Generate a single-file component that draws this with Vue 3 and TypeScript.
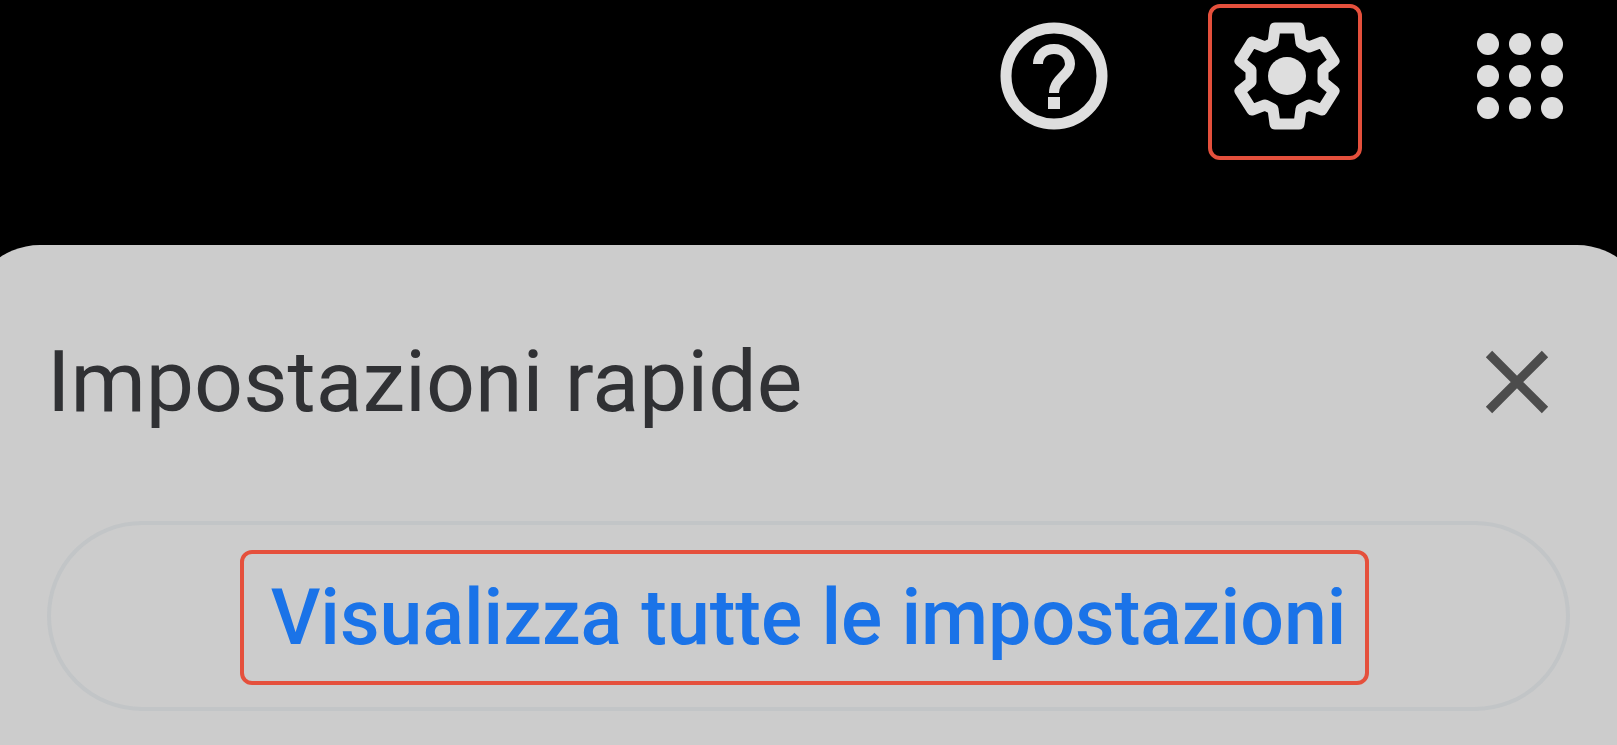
<script setup lang="ts">
const dotOffsets: number[] = [-32, 0, 32]
</script>

<template>
  <div class="page">
    <header class="toolbar">
      <button class="icon-button" type="button" aria-label="Assistenza">
        <svg viewBox="-64 -64 128 128" aria-hidden="true">
          <circle r="48" class="line" />
          <path class="line hook" d="M-16-12C-16-21-9-27 0-27C10-27 16-20 16-12C16-1 0 2 0 17" />
          <rect class="solid" x="-6" y="21" width="12" height="12" />
        </svg>
      </button>
      <button class="icon-button" type="button" aria-label="Impostazioni">
        <svg viewBox="-64 -64 128 128" aria-hidden="true">
          <path
            class="line"
            d="M-12-48H12L14-33L22-29L35-34L47-15L36-6V6L47 15L35 34L22 29L14 33L12 48H-12L-14 33L-22 29L-35 34L-47 15L-36 6V-6L-47-15L-35-34L-22-29L-14-33Z"
          />
          <circle class="solid" r="19" />
        </svg>
        <span class="highlight"></span>
      </button>
      <button class="icon-button" type="button" aria-label="App">
        <svg viewBox="-64 -64 128 128" aria-hidden="true">
          <template v-for="y in dotOffsets" :key="y">
            <circle v-for="x in dotOffsets" :key="x" class="solid" :cx="x" :cy="y" r="11" />
          </template>
        </svg>
      </button>
    </header>

    <main class="panel">
      <div class="panel-head">
        <h1>Impostazioni rapide</h1>
        <button class="close" type="button" aria-label="Chiudi">
          <svg viewBox="-36 -36 72 72" aria-hidden="true">
            <path d="M-28-28L28 28M28-28L-28 28" />
          </svg>
        </button>
      </div>
      <button class="all-settings" type="button">
        <span class="marked">
          Visualizza tutte le impostazioni
          <span class="highlight"></span>
        </span>
      </button>
    </main>
  </div>
</template>

<style>
body {
  margin: 0;
  background: #cccccc;
}
</style>

<style scoped>
.page {
  min-height: 100vh;
  box-sizing: border-box;
  overflow: hidden;
  background: #000000;
  display: flex;
  flex-direction: column;
  font-family: Roboto, "Liberation Sans", sans-serif;
}

button {
  margin: 0;
  padding: 0;
  border: 0;
  background: none;
  font: inherit;
  cursor: pointer;
}

.toolbar {
  display: flex;
  justify-content: flex-end;
  gap: 105px;
  padding: 12px 33px 105px;
}

.icon-button {
  position: relative;
  width: 128px;
  height: 128px;
}

svg {
  display: block;
  width: 100%;
  height: 100%;
}

.line {
  fill: none;
  stroke: #dedede;
  stroke-width: 11px;
  stroke-linejoin: round;
}

.hook {
  stroke-width: 10px;
}

.solid {
  fill: #dedede;
}

.highlight {
  position: absolute;
  inset: -8px -11px -20px -15px;
  border: 4px solid #e5503c;
  border-radius: 12px;
}

.panel {
  flex: 1;
  margin: 0 -32px;
  padding: 81px 79px 34px;
  border-radius: 72px 72px 0 0;
  background: #cccccc;
}

.panel-head {
  display: flex;
  align-items: center;
  justify-content: space-between;
  padding-right: 17px;
}

h1 {
  margin: 0;
  font-size: 86px;
  line-height: 112px;
  font-weight: 400;
  color: #303134;
  white-space: nowrap;
}

.close {
  width: 72px;
  height: 72px;
}

.close path {
  stroke: #4c4c4c;
  stroke-width: 9px;
}

.all-settings {
  display: flex;
  align-items: center;
  justify-content: center;
  width: 100%;
  height: 190px;
  margin-top: 83px;
  border: 4px solid #c2c5c7;
  border-radius: 96px;
}

.marked {
  position: relative;
  padding-top: 3px;
  font-size: 77px;
  line-height: 96px;
  font-weight: 500;
  color: #1a73e8;
  white-space: nowrap;
}

.marked .highlight {
  inset: -17px -23px -19px -31px;
}
</style>
